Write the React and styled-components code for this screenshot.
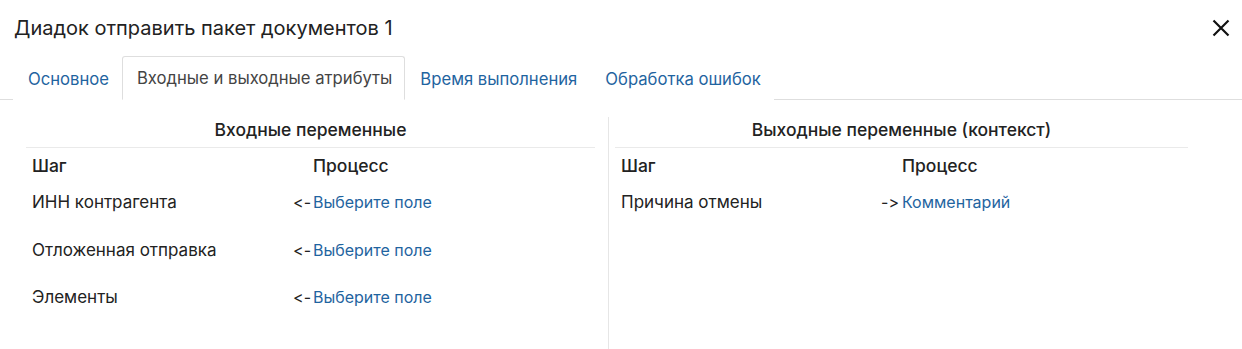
import React from "react";
import styled, { createGlobalStyle } from "styled-components";

const Global = createGlobalStyle`
  html, body { margin: 0; padding: 0; background: #fff; }
  body {
    font-family: Inter, Roboto, "Noto Sans", sans-serif;
    color: #222;
    font-feature-settings: "calt" 0, "liga" 0;
    font-variant-ligatures: none;
  }
  * { box-sizing: border-box; }
`;

const Dialog = styled.div`
  width: 1242px;
  height: 349px;
  display: flex;
  flex-direction: column;
  overflow: hidden;
`;

const Header = styled.div`
  display: flex;
  align-items: center;
  justify-content: space-between;
  height: 56px;
  padding: 0 10px 0 14px;
`;

const Title = styled.h1`
  margin: 0;
  font-family: Inter, Roboto, sans-serif;
  font-size: 20px;
  font-weight: 400;
  color: #222;
`;

const Close = styled.button`
  border: 0;
  background: none;
  padding: 0;
  width: 22px;
  height: 22px;
  display: flex;
  align-items: center;
  justify-content: center;
  cursor: pointer;
`;

const Tabs = styled.div`
  display: flex;
  padding-left: 13px;
  border-bottom: 1px solid #dedede;
  height: 44px;
`;

const Tab = styled.div`
  padding: 0 12px 0 14px;
  display: flex;
  align-items: center;
  font-family: Inter, Roboto, sans-serif;
  font-size: 16.65px;
  color: ${(p) => (p.$active ? "#444" : "#1f64a0")};
  border: 1px solid ${(p) => (p.$active ? "#dedede" : "transparent")};
  border-bottom: ${(p) => (p.$active ? "1px solid #fff" : "0")};
  border-radius: 3px 3px 0 0;
  background: #fff;
  margin-bottom: -1px;
`;

const Body = styled.div`
  display: flex;
  padding: 17px 0 0 26px;
  flex: 1;
`;

const Panel = styled.div`
  width: ${(p) => p.$w}px;
  padding: ${(p) => p.$pad};
  border-left: ${(p) => (p.$divider ? "1px solid #e6e6e6" : "0")};
`;

const PanelTitle = styled.div`
  text-align: center;
  font-size: 17.5px;
  font-weight: 500;
  color: #222;
  height: 31px;
  line-height: 26px;
  border-bottom: 1px solid #eaeaea;
`;

const Grid = styled.div`
  display: grid;
  grid-template-columns: ${(p) => p.$cols};
`;

const HeadCell = styled.div`
  font-size: 17.5px;
  font-weight: 500;
  height: 35px;
  line-height: 35px;
  padding-left: 6px;
`;

const Cell = styled.div`
  font-size: 17px;
  height: 47.5px;
  line-height: 39px;
  padding-left: 6px;
  display: flex;
  align-items: baseline;
`;

const Arrow = styled.span`
  color: #222;
  width: 26px;
  margin-left: -26px;
  padding-right: ${(p) => p.$gap}px;
  text-align: right;
  flex: none;
  font-size: 16px;
`;

const Link = styled.a`
  color: #1f64a0;
  font-size: 16px;
  text-decoration: none;
  cursor: pointer;
`;

const inputs = ["ИНН контрагента", "Отложенная отправка", "Элементы"];

export default function App() {
  return (
    <Dialog>
      <Global />
      <Header>
        <Title>Диадок отправить пакет документов 1</Title>
        <Close aria-label="Закрыть">
          <svg width="18" height="18" viewBox="0 0 18 18">
            <path d="M1.5 1.5 L16.5 16.5 M16.5 1.5 L1.5 16.5" stroke="#111" strokeWidth="2.2" />
          </svg>
        </Close>
      </Header>
      <Tabs>
        <Tab>Основное</Tab>
        <Tab $active>Входные и выходные атрибуты</Tab>
        <Tab>Время выполнения</Tab>
        <Tab>Обработка ошибок</Tab>
      </Tabs>
      <Body>
        <Panel $w={582} $pad="0 13px 0 0">
          <PanelTitle>Входные переменные</PanelTitle>
          <Grid $cols="281px 1fr">
            <HeadCell>Шаг</HeadCell>
            <HeadCell>Процесс</HeadCell>
            {inputs.map((n) => (
              <React.Fragment key={n}>
                <Cell>{n}</Cell>
                <Cell>
                  <Arrow $gap={2}>&lt;-</Arrow>
                  <Link>Выберите поле</Link>
                </Cell>
              </React.Fragment>
            ))}
          </Grid>
        </Panel>
        <Panel $w={580} $pad="0 0 0 6px" $divider>
          <PanelTitle>Выходные переменные (контекст)</PanelTitle>
          <Grid $cols="281px 1fr">
            <HeadCell>Шаг</HeadCell>
            <HeadCell>Процесс</HeadCell>
            <Cell>Причина отмены</Cell>
            <Cell>
              <Arrow $gap={3}>-&gt;</Arrow>
              <Link>Комментарий</Link>
            </Cell>
          </Grid>
        </Panel>
      </Body>
    </Dialog>
  );
}
